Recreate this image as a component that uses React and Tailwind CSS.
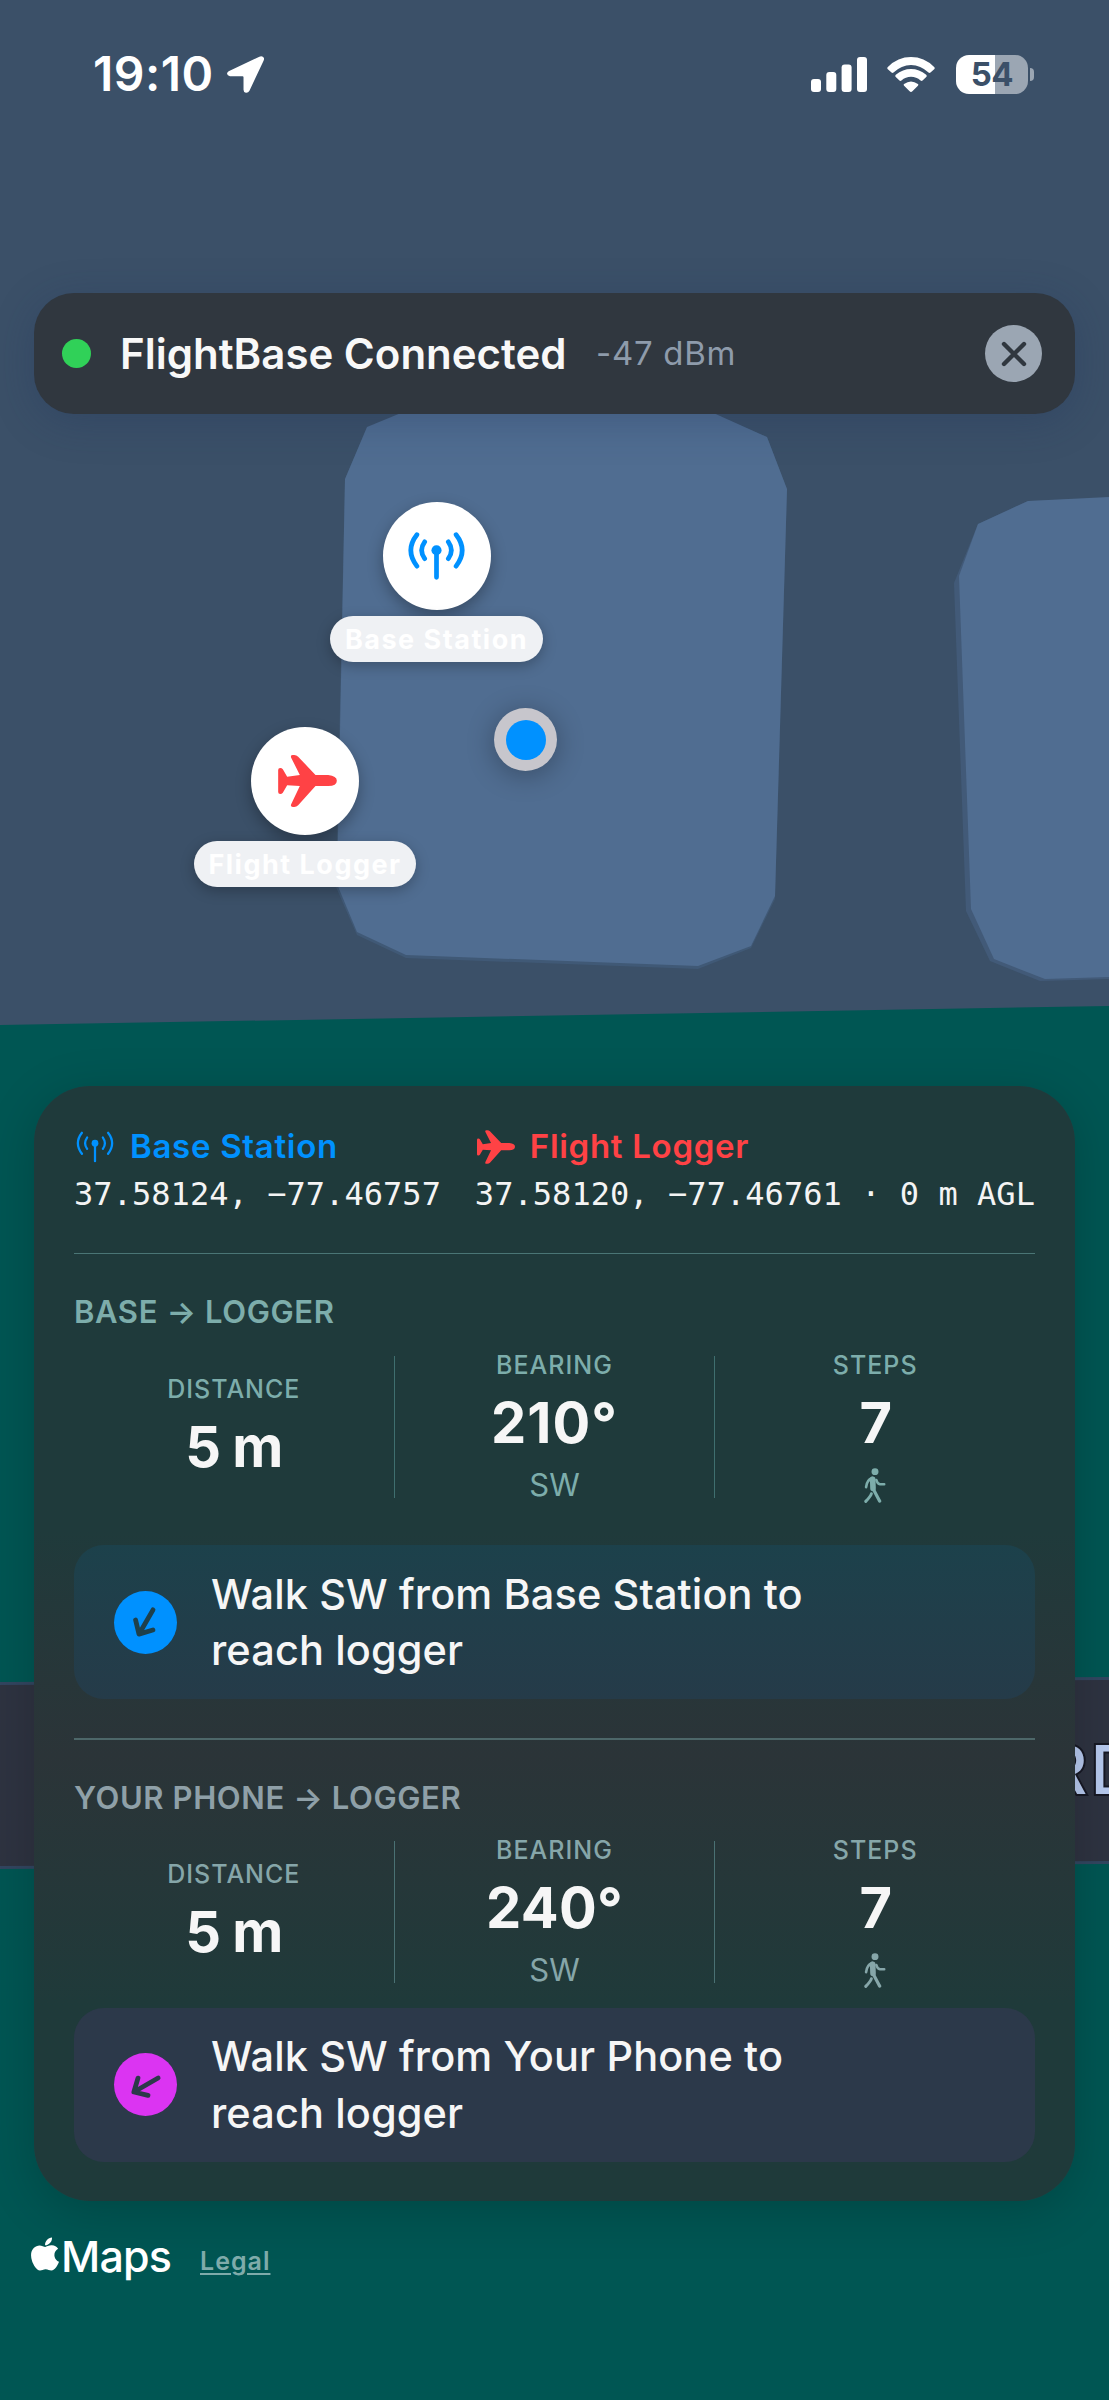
import { FaApple } from "react-icons/fa";

const sections = [
    {
        title: "BASE → LOGGER",
        titleClass: "mt-[38px] text-[#7dadab]",
        rowClass: "mt-[18px]",
        lineClass: "bg-[#3f6f6f]",
        labelClass: "text-[#7dadab]",
        bearing: "210°",
        bearingClass: "tracking-[1px]",
        boxClass: "mt-[41px] bg-linear-to-b from-[#1c414b] to-[#253b49]",
        circleClass: "bg-[#0091ff]",
        arrowColor: "#1e404b",
        angle: 210,
        from: "Base Station",
    },
    {
        title: "YOUR PHONE → LOGGER",
        titleClass: "mt-[38px] text-[#8fa0a8]",
        rowClass: "mt-[17px]",
        lineClass: "bg-[#4a7173]",
        labelClass: "text-[#86a6a9]",
        bearing: "240°",
        bearingClass: "tracking-[0.3px]",
        boxClass: "mt-[18.5px] bg-[#2c394a]",
        circleClass: "bg-[#db34f2]",
        arrowColor: "#2c394a",
        angle: 240,
        from: "Your Phone",
    },
];

function Antenna({ className, stroke }){
    return(
        <svg viewBox="0 0 168 142" className={className} fill="none" stroke="currentColor" strokeWidth={stroke} strokeLinecap="round">
            <path d="M26 8 Q-10 54 26 101 M49 29 Q31 54 49 79 M142 8 Q178 54 142 101 M119 29 Q137 54 119 79 M84 56 V134" />
            <circle cx="84" cy="54" r="15" fill="currentColor" stroke="none" />
        </svg>
    )
}

function Plane({ className }){
    return(
        <svg viewBox="0 0 176 156" className={className} fill="currentColor">
            <path d="M0 45 Q0 39 6 39 Q11 39 14 43 L27 65 L65 60 L39 8 Q36 0 44 0 H48 Q55 0 60 5 L112 60 H150 Q176 63 176 77 Q176 93 150 93 H112 L60 151 Q55 156 48 156 H44 Q36 156 39 148 L65 93 L27 91 L14 113 Q11 117 6 117 Q0 117 0 111 Z" />
        </svg>
    )
}

function Walker(){
    return(
        <svg viewBox="0 0 66 106" className="w-[22px] h-[35px]" fill="none" stroke="currentColor" strokeLinecap="round" strokeLinejoin="round">
            <circle cx="33" cy="11" r="10.5" fill="currentColor" stroke="none" />
            <path d="M26 34 L27 62" strokeWidth="17" />
            <path d="M24 30 Q8 36 6 58" strokeWidth="8" />
            <path d="M37 36 Q40 48 48 49 L61 49" strokeWidth="7.5" />
            <path d="M28 64 Q34 76 47 100" strokeWidth="10" />
            <path d="M22 78 Q20 86 5 101" strokeWidth="9" />
        </svg>
    )
}

function StatusBar(){
    return(
        <div className="flex items-center justify-between h-[148px] pl-[93px] pr-[75px] text-white">
            <div className="flex items-center">
                <p className="w-[134px] text-[48px] leading-none font-semibold tracking-[0.5px]">19:10</p>
                <svg viewBox="0 0 112 112" className="w-[37px] h-[37px]" fill="currentColor">
                    <path d="M5 46 L98 2 Q108 -1 112 6 Q113 10 110 16 L68 105 Q64 112 57 111 Q50 110 50 102 L50 64 Q50 61 47 61 L9 61 Q1 60 0 54 Q0 49 5 46 Z" />
                </svg>
            </div>
            <div className="flex items-center">
                <svg viewBox="0 0 56 35" className="w-[56px] h-[35px]" fill="currentColor">
                    <rect x="0" y="22" width="10" height="13" rx="3" />
                    <rect x="15.3" y="15" width="10" height="20" rx="3" />
                    <rect x="30.6" y="7.5" width="10" height="27.5" rx="3" />
                    <rect x="46" y="0" width="10" height="35" rx="3" />
                </svg>
                <svg viewBox="0 0 144 106" className="ml-[20px] w-[48px] h-[35px]" fill="currentColor">
                    <path d="M72 106 Q70 106 67 103 L51 87 Q48 84 51 82 Q72 66 93 82 Q96 84 93 87 L77 103 Q74 106 72 106 Z" />
                    <path d="M25 60 Q23 57 26 54 Q47 36 72 36 Q97 36 118 54 Q121 57 119 60 L107 71 Q104 74 101 71 Q88 60 72 60 Q56 60 43 71 Q40 74 37 71 Z" />
                    <path d="M1 36 Q-1 33 2 30 Q32 0 72 0 Q112 0 142 30 Q145 33 143 36 L131 47 Q128 50 125 47 Q101 24 72 24 Q43 24 19 47 Q16 50 13 47 Z" />
                </svg>
                <div className="ml-[21px] flex items-center justify-center w-[72px] h-[39px] rounded-[13px] bg-linear-to-r from-white from-[54%] to-[#9ba6b3] to-[54%]">
                    <span className="text-[33px] leading-none font-bold tracking-[-0.5px] text-[#3b5068]">54</span>
                </div>
                <div className="ml-[2px] w-[4px] h-[13px] rounded-r-full bg-[#9ba6b3]"></div>
            </div>
        </div>
    )
}

function MapBackground(){
    return(
        <svg viewBox="0 0 1109 2400" className="absolute inset-0 w-full h-full">
            <rect width="1109" height="2400" fill="#3b5068" />
            <path d="M401 414 L367 428 L345 479 L336 887 L357 935 L406 958 L698 969 L751 948 L775 899 L787 490 L767 437 L709 412 Z" fill="#405976" />
            <path d="M401 413 L367 427 L345 479 L337 884 L357 932 L406 955 L698 966 L751 946 L775 896 L787 489 L767 437 L709 411 Z" fill="#506d91" />
            <path d="M1109 498 L1028 501 L978 524 L954 583 L966 911 L990 961 L1040 981 L1109 979 Z" fill="#425a78" />
            <path d="M1109 497 L1028 501 L978 524 L959 576 L971 909 L994 959 L1045 979 L1109 977 Z" fill="#506d91" />
            <path d="M0 1025 L1109 1006 V2400 H0 Z" fill="#005653" />
            <path d="M0 1682 L1109 1677 V1864 L0 1869 Z" fill="#324660" />
            <path d="M0 1685 L1109 1680 V1861 L0 1866 Z" fill="#2e3341" />
        </svg>
    )
}

function Marker({ children, label, className }){
    return(
        <div className={"absolute flex flex-col items-center gap-[6px] " + className}>
            <div className="flex items-center justify-center w-[108px] h-[108px] rounded-full bg-white shadow-[0_6px_16px_rgba(0,0,0,0.3)]">
                {children}
            </div>
            <p className="flex items-center justify-center w-full h-[46px] pt-[2px] rounded-full bg-[#eff1f4] text-[27px] font-bold tracking-[1.5px] whitespace-nowrap text-white shadow-[0_4px_14px_rgba(0,0,0,0.25)]">{label}</p>
        </div>
    )
}

function Metric({ label, value, labelClass, valueClass = "tracking-[-1px]", children }){
    return(
        <div className="flex flex-1 flex-col items-center justify-center">
            <p className={"text-[25px] leading-[30px] font-medium tracking-[1px] " + labelClass}>{label}</p>
            <p className={"mt-[10px] text-[56px] leading-[66px] font-bold text-[#f6f6f6] " + valueClass}>{value}</p>
            {children && (
                <div className={"mt-[10px] flex h-[38px] items-center text-[31px] " + labelClass}>{children}</div>
            )}
        </div>
    )
}

function Section({ section }){
    return(
        <>
            <h2 className={"text-[31px] leading-[40px] font-semibold tracking-[0.6px] " + section.titleClass}>{section.title}</h2>
            <div className={"flex h-[154px] items-center " + section.rowClass}>
                <Metric label="DISTANCE" value="5 m" labelClass={section.labelClass} />
                <div className={"w-px h-[142px] " + section.lineClass}></div>
                <Metric label="BEARING" value={section.bearing} labelClass={section.labelClass} valueClass={section.bearingClass}>SW</Metric>
                <div className={"w-px h-[142px] " + section.lineClass}></div>
                <Metric label="STEPS" value="7" labelClass={section.labelClass}><Walker /></Metric>
            </div>
            <div className={"flex h-[154px] items-center rounded-[30px] pl-[40px] " + section.boxClass}>
                <div className={"flex items-center justify-center w-[63px] h-[63px] rounded-full " + section.circleClass}>
                    <svg viewBox="-16 -16 32 32" className="w-[32px] h-[32px]" fill="none" stroke={section.arrowColor} strokeWidth="4.8" strokeLinecap="round" strokeLinejoin="round">
                        <path d="M0 14 V-13 M-10 -3.5 L0 -14 L10 -3.5" transform={`rotate(${section.angle})`} />
                    </svg>
                </div>
                <p className="ml-[34px] text-[41.5px] leading-[56.5px] font-medium tracking-[0.1px] text-[#f6f6f6]">
                    Walk SW from {section.from} to<br />reach logger
                </p>
            </div>
        </>
    )
}

export default function App(){
    return(
        <div className="relative flex flex-col w-[1109px] h-[2400px] overflow-hidden font-['Inter',sans-serif]">
            <MapBackground />

            <p className="absolute left-[1044px] top-[1729px] text-[67px] leading-[81px] font-medium whitespace-nowrap tracking-[3px] text-[#b6c9ee] [-webkit-text-stroke:4px_#161824] [paint-order:stroke_fill]">RD</p>

            <Marker label="Base Station" className="left-[330px] top-[502px] w-[213px]">
                <Antenna className="w-[57px] h-[48px] text-[#0091ff]" stroke={14} />
            </Marker>
            <Marker label="Flight Logger" className="left-[194px] top-[727px] w-[222px]">
                <Plane className="w-[59px] h-[52px] translate-x-[2px] text-[#ff4245]" />
            </Marker>
            <div className="absolute left-[494px] top-[708px] flex items-center justify-center w-[63px] h-[63px] rounded-full bg-[#c7c6cc] shadow-[0_4px_28px_rgba(0,0,0,0.3)]">
                <div className="w-[40px] h-[40px] rounded-full bg-[#0091ff]"></div>
            </div>

            <div className="relative">
                <StatusBar />

                <div className="mt-[145px] mx-[34px] flex items-center h-[121px] rounded-[40px] bg-[#30373f] pl-[28px] pr-[33px] shadow-[0_8px_40px_rgba(30,50,90,0.3)]">
                    <div className="w-[29px] h-[29px] rounded-full bg-[#30d158]"></div>
                    <p className="ml-[29px] w-[476px] text-[42px] font-semibold whitespace-nowrap text-[#f8f8f8]">FlightBase Connected</p>
                    <p className="text-[33px] tracking-[0.7px] text-[#8e9bab]">-47 dBm</p>
                    <button className="ml-auto flex items-center justify-center w-[57px] h-[57px] rounded-full bg-[#9ba6b3]">
                        <svg viewBox="0 0 26 26" className="w-[26px] h-[26px]" stroke="#30373f" strokeWidth="4.4" strokeLinecap="round">
                            <path d="M3 3 L23 23 M23 3 L3 23" />
                        </svg>
                    </button>
                </div>

                <div className="mt-[672px] mx-[34px] h-[1115px] rounded-[56px] px-[40px] pt-[40px] bg-linear-to-b from-[#1f3a3b] from-[40%] via-[#2b3438] via-[60%] to-[#1f3a3a] to-[82%] shadow-[0_10px_50px_rgba(0,0,0,0.18)]">
                    <div className="flex justify-between">
                        <div>
                            <p className="flex items-center h-[41px] text-[33px] font-semibold text-[#0091ff]">
                                <Antenna className="ml-[2px] mr-[16px] w-[38px] h-[32px]" stroke={10} />
                                <span className="tracking-[0.7px]">Base Station</span>
                            </p>
                            <p className="mt-[8px] font-['DejaVu_Sans_Mono',monospace] text-[32px] leading-[39px] tracking-[0.05px] text-[#f4f4f4]">37.58124, −77.46757</p>
                        </div>
                        <div>
                            <p className="flex items-center h-[41px] text-[33px] font-semibold text-[#ff4245]">
                                <Plane className="ml-[2px] mr-[15px] w-[38px] h-[34px]" />
                                <span className="tracking-[0.7px]">Flight Logger</span>
                            </p>
                            <p className="mt-[8px] font-['DejaVu_Sans_Mono',monospace] text-[32px] leading-[39px] tracking-[0.05px] whitespace-nowrap text-[#f4f4f4]">37.58120, −77.46761 · 0 m AGL</p>
                        </div>
                    </div>
                    <div className="mt-[39px] h-px bg-[#4a7575]"></div>
                    <Section section={sections[0]} />
                    <div className="mt-[39px] h-[2px] bg-[#4d6769]"></div>
                    <Section section={sections[1]} />
                </div>

                <div className="mt-[23px] flex items-baseline pl-[29px]">
                    <p className="flex items-baseline text-[43px] font-medium tracking-[-0.8px] text-white">
                        <FaApple className="w-[32px] h-[38px] translate-y-[1px]" />
                        <span className="w-[139px]">Maps</span>
                    </p>
                    <a href="#" className="-translate-y-[2px] text-[25px] font-semibold tracking-[1px] underline decoration-2 underline-offset-3 text-[#7fabaa]">Legal</a>
                </div>
            </div>
        </div>
    )
}
